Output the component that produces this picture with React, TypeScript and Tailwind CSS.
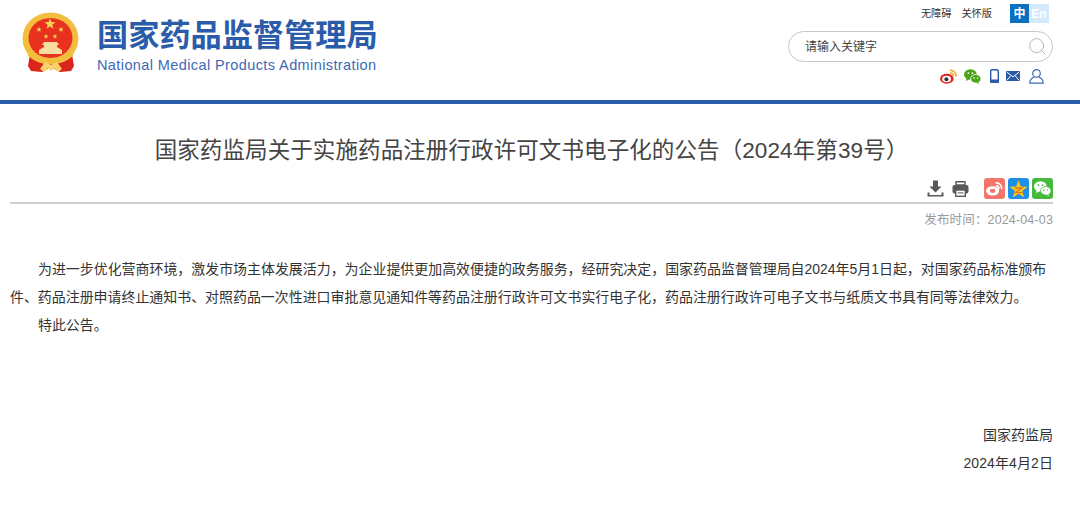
import { Search } from 'lucide-react';

const cjk = { fontFamily: '"Liberation Sans", "Noto Sans CJK SC", sans-serif' };

// five pointed star as svg points
function starPoints(cx: number, cy: number, r: number, rot = -90) {
  const pts: string[] = [];
  for (let i = 0; i < 10; i++) {
    const rad = i % 2 === 0 ? r : r * 0.42;
    const a = ((rot + i * 36) * Math.PI) / 180;
    pts.push(`${(cx + rad * Math.cos(a)).toFixed(2)},${(cy + rad * Math.sin(a)).toFixed(2)}`);
  }
  return pts.join(' ');
}

function Emblem() {
  return (
    <svg width="58" height="61" viewBox="0 0 58 61" className="shrink-0">
      {/* ribbons */}
      <path d="M8 42 L6 54 L9 59 L20 60 L29 55 L38 60 L49 59 L52 54 L50 42 Z" fill="#d8261c" />
      {/* wreath */}
      <ellipse cx="28.5" cy="26.5" rx="28" ry="26" fill="#f3bd3e" />
      <ellipse cx="28.5" cy="26" rx="22" ry="20" fill="#e9311f" />
      {/* stars */}
      <polygon points={starPoints(28, 12, 5.8)} fill="#f7d253" />
      <polygon points={starPoints(17, 17.5, 2.8)} fill="#f7d253" />
      <polygon points={starPoints(39, 17.5, 2.8)} fill="#f7d253" />
      <polygon points={starPoints(24, 24.5, 2.6)} fill="#f7d253" />
      <polygon points={starPoints(33, 24.5, 2.6)} fill="#f7d253" />
      {/* gate */}
      <path d="M20 33 L22 30 L35 30 L37 33 L35 33 L35 35 L40 38 L40 42 L17 42 L17 38 L22 35 L22 33 Z" fill="#f9dca0" />
      <path d="M6 37 Q16 46 28.5 46 Q41 46 51 37 L51 44 Q40 53 28.5 52 Q17 53 6 44 Z" fill="#f3bd3e" />
      {/* bow */}
      <path d="M18 57 L23 50 L29 53 L35 50 L40 57 L36 60 L32 56 L29 59 L26 56 L22 60 Z" fill="#f7d36a" />
    </svg>
  );
}

function WeiboIcon() {
  return (
    <svg width="17" height="15" viewBox="0 0 17 15">
      <ellipse cx="6.8" cy="9.8" rx="6.8" ry="5" fill="#e2231a" />
      <ellipse cx="6.6" cy="10" rx="4.4" ry="3.2" fill="#fff" />
      <circle cx="6.4" cy="10.2" r="2" fill="#333" />
      <path d="M10.5 1.2 A5.6 5.6 0 0 1 16 7" fill="none" stroke="#f5a623" strokeWidth="1.6" strokeLinecap="round" />
      <path d="M10.8 4 A2.8 2.8 0 0 1 13.4 7" fill="none" stroke="#f5a623" strokeWidth="1.4" strokeLinecap="round" />
    </svg>
  );
}

function WechatIcon({ color = '#4ba415', eye = '#fff', width = 17, height = 15 }: { color?: string; eye?: string; width?: number; height?: number }) {
  return (
    <svg width={width} height={height} viewBox="0 0 17 15">
      <ellipse cx="6.4" cy="5.4" rx="6.4" ry="5.2" fill={color} />
      <path d="M2.6 8.6 L2 12 L5.6 10.2 Z" fill={color} />
      <ellipse cx="11.8" cy="9.8" rx="5.2" ry="4.3" fill={color} stroke={eye} strokeWidth="0.8" />
      <path d="M14.2 13 L15 15 L12.2 13.8 Z" fill={color} />
      <circle cx="4.4" cy="4.2" r="0.9" fill={eye} />
      <circle cx="8.4" cy="4.2" r="0.9" fill={eye} />
      <circle cx="10" cy="9" r="0.8" fill={eye} />
      <circle cx="13.6" cy="9" r="0.8" fill={eye} />
    </svg>
  );
}

function PhoneIcon() {
  return (
    <svg width="9" height="14" viewBox="0 0 9 14">
      <rect x="0.7" y="0.7" width="7.6" height="12.6" rx="1.4" fill="#fff" stroke="#2a5caa" strokeWidth="1.4" />
      <rect x="0" y="10.5" width="9" height="3.5" rx="1" fill="#2a5caa" />
    </svg>
  );
}

function MailIcon() {
  return (
    <svg width="14" height="10" viewBox="0 0 14 10">
      <rect width="14" height="10" rx="1" fill="#2a5caa" />
      <path d="M1 1.2 L7 5.8 L13 1.2 M1 9.2 L5 4.6 M13 9.2 L9 4.6" fill="none" stroke="#fff" strokeWidth="1" />
    </svg>
  );
}

function UserIcon() {
  return (
    <svg width="15" height="15" viewBox="0 0 15 15" fill="none" stroke="#3f69b5" strokeWidth="1.2">
      <ellipse cx="7.5" cy="4.4" rx="3.8" ry="3.8" />
      <path d="M5.4 8 C2.6 9 0.8 10.8 0.8 14.2 H14.2 C14.2 10.8 12.4 9 9.6 8" />
    </svg>
  );
}

function DownloadIcon() {
  return (
    <svg width="17" height="17" viewBox="0 0 17 17" fill="#595959">
      <path d="M6 0.5 H11 V6.5 H14.5 L8.5 12.5 L2.5 6.5 H6 Z" />
      <path d="M0.5 12.5 H2.5 V15 H14.5 V12.5 H16.5 V16.5 H0.5 Z" />
    </svg>
  );
}

function PrintIcon() {
  return (
    <svg width="17" height="16" viewBox="0 0 17 16">
      <path d="M4 0.7 H13 V4 H4 Z" fill="none" stroke="#595959" strokeWidth="1.4" />
      <rect x="0.5" y="4" width="16" height="8.5" rx="2" fill="#595959" />
      <rect x="3.7" y="9" width="9.6" height="6.3" fill="#fff" stroke="#595959" strokeWidth="1.4" />
      <rect x="5.5" y="11.4" width="6" height="1" fill="#595959" />
    </svg>
  );
}

function QzoneIcon() {
  return (
    <svg width="19" height="18" viewBox="0 0 19 18">
      <polygon points={starPoints(9.5, 9.8, 9.6)} fill="#fcc21b" />
      <path d="M6 8 H13 L6.5 12.6 H13.5" fill="none" stroke="#e0781c" strokeWidth="1.3" />
    </svg>
  );
}

function ShareBox({ bg, children }: { bg: string; children: React.ReactNode }) {
  return (
    <span className={`flex h-[21px] w-[21px] items-center justify-center rounded-[3px] ${bg}`}>{children}</span>
  );
}

export default function App() {
  return (
    <div className="min-h-[518px] w-[1080px] overflow-hidden bg-white text-[#333]" style={cjk}>
      {/* Header */}
      <header className="flex h-[104px] items-start justify-between border-b-4 border-[#2a5caa] pl-[22px] pr-[27px]">
        <div className="flex items-start gap-[17px] pt-[12px]">
          <Emblem />
          <div className="pt-[4px]">
            <div className="text-[31.2px] font-bold leading-[40px] text-[#2a5caa]">国家药品监督管理局</div>
            <div className="text-[14.5px] leading-[18px] tracking-[0.4px] text-[#3f69b5]">
              National Medical Products Administration
            </div>
          </div>
        </div>
        <div className="flex w-[265px] flex-col items-end pt-[4px]">
          <div className="flex h-[19px] items-center pr-[4px] text-[10.2px] text-[#333]">
            <span>无障碍</span>
            <span className="ml-[10px]">关怀版</span>
            <span className="ml-[18px] flex">
              <span className="flex h-[19px] w-[19px] items-center justify-center bg-[#0b6fc2] text-[12px] font-bold text-white">中</span>
              <span className="flex h-[19px] w-[20px] items-center justify-center bg-[#d5e9fc] text-[12px] font-bold text-white">En</span>
            </span>
          </div>
          <div className="mt-[8px] flex h-[31px] w-full items-center justify-between rounded-full border border-[#c8c8c8] pl-[16px] pr-[4px] text-[12px] text-[#444]">
            <span>请输入关键字</span>
            <Search size={21} strokeWidth={1.1} className="text-[#b5b5b5]" />
          </div>
          <div className="mt-[6px] flex h-[16px] w-full items-center pl-[152px]">
            <WeiboIcon />
            <span className="ml-[7px]"><WechatIcon /></span>
            <span className="ml-[9px]"><PhoneIcon /></span>
            <span className="ml-[7px]"><MailIcon /></span>
            <span className="ml-[9px]"><UserIcon /></span>
          </div>
        </div>
      </header>

      {/* Article */}
      <main className="px-[10px] pr-[27px]">
        <h1 className="mt-[31px] text-center text-[22.5px] font-normal leading-[32px] tracking-[0.1px] text-[#444]">
          国家药监局关于实施药品注册行政许可文书电子化的公告（2024年第39号）
        </h1>
        <div className="mt-[11px] flex h-[26px] items-center justify-end gap-[15px] border-b-2 border-[#d0d0d0] pb-[3px]">
          <div className="flex items-center gap-[8px]">
            <DownloadIcon />
            <PrintIcon />
          </div>
          <div className="flex items-center gap-[3px]">
            <ShareBox bg="bg-[#f4766a]">
              <svg width="17" height="15" viewBox="0 0 18 16">
                <ellipse cx="7" cy="10.5" rx="7" ry="5" fill="#fff" />
                <ellipse cx="7" cy="10.5" rx="3" ry="2.3" fill="#f4766a" />
                <path d="M11 2 A6 6 0 0 1 16.6 8" fill="none" stroke="#fff" strokeWidth="1.8" strokeLinecap="round" />
                <path d="M11 5 A3 3 0 0 1 13.8 8" fill="none" stroke="#fff" strokeWidth="1.5" strokeLinecap="round" />
              </svg>
            </ShareBox>
            <ShareBox bg="bg-[#1c8fe8]"><QzoneIcon /></ShareBox>
            <ShareBox bg="bg-[#46b83c]"><WechatIcon color="#fff" eye="#46b83c" width={17} height={15} /></ShareBox>
          </div>
        </div>
        <div className="mt-[7px] text-right text-[12.5px] leading-[18px] tracking-[0.15px] text-[#999]">发布时间：2024-04-03</div>

        <div className="mt-[27px] text-[13.95px] leading-[27.8px] text-[#333]">
          <p className="indent-[28px]">
            为进一步优化营商环境，激发市场主体发展活力，为企业提供更加高效便捷的政务服务，经研究决定，国家药品监督管理局自2024年5月1日起，对国家药品标准颁布件、药品注册申请终止通知书、对照药品一次性进口审批意见通知件等药品注册行政许可文书实行电子化，药品注册行政许可电子文书与纸质文书具有同等法律效力。
          </p>
          <p className="indent-[28px]">特此公告。</p>
        </div>

        <div className="mt-[83px] text-right text-[14px] leading-[27.8px]">
          <p>国家药监局</p>
          <p className="tracking-[0.1px]">2024年4月2日</p>
        </div>
      </main>
    </div>
  );
}
